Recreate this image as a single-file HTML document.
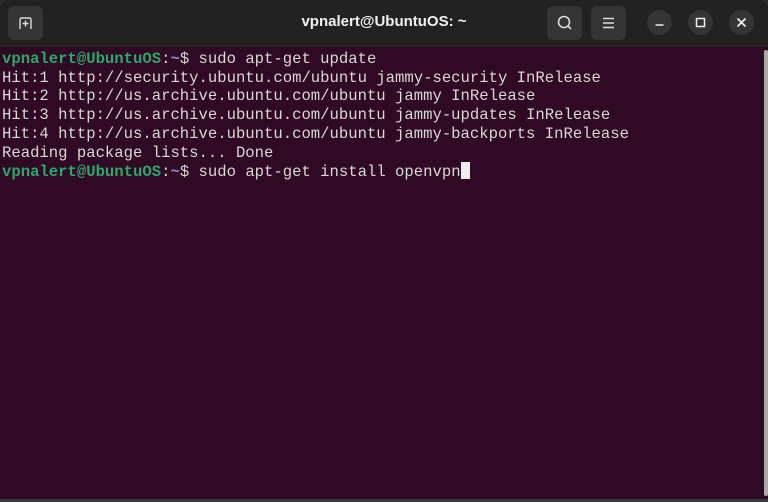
<!DOCTYPE html>
<html><head><style>
html,body{margin:0;padding:0;width:768px;height:502px;overflow:hidden;background:#2b2b2b;}
.win{position:absolute;left:0;top:0;width:768px;height:499px;background:#300a24;border-radius:10px 10px 0 0;overflow:hidden;}
.bar{position:absolute;left:0;top:0;width:768px;height:47px;background:#222222;}
.title{position:absolute;left:0;width:768px;top:13px;text-align:center;color:#f2f2f2;font:bold 15px "Liberation Sans",sans-serif;}
.btn{position:absolute;top:6px;width:35px;height:34px;background:#353535;border-radius:6px;}
.circ{position:absolute;top:10px;width:25px;height:25px;border-radius:50%;background:#353535;}
.term{position:absolute;left:2px;top:50px;font:15.6px/18.7px "Liberation Mono",monospace;color:#d8d8d5;white-space:pre;}
.g{color:#2aa86a;font-weight:bold}.b{color:#7b8fd0;font-weight:bold}
.cur{display:inline-block;width:9px;height:17px;background:#eee;vertical-align:-3px;}
.sb{position:absolute;left:764px;top:50px;width:4px;height:446px;background:#aaa;border-radius:2px;}
.bot{position:absolute;left:0;top:499px;width:768px;height:3px;background:#3a3a3a;}
</style></head><body>
<div class="win">
<div class="bar">
<div class="btn" style="left:8px"><svg width="35" height="34"><path d="M12 23V13.5a1.5 1.5 0 0 1 1.5-1.5h8a1.5 1.5 0 0 1 1.5 1.5V23M17.5 14.5v6M14.5 17.5h6" stroke="#ddd" stroke-width="1.4" fill="none"/></svg></div>
<div class="title">vpnalert@UbuntuOS: ~</div>
<div class="btn" style="left:547px"><svg width="35" height="34"><circle cx="17" cy="16" r="5.5" stroke="#ddd" stroke-width="1.6" fill="none"/><path d="M21 20l3 3" stroke="#ddd" stroke-width="1.6"/></svg></div>
<div class="btn" style="left:591px"><svg width="35" height="34"><path d="M12 12.5h11M12 17h11M12 21.5h11" stroke="#ddd" stroke-width="1.4"/></svg></div>
<div class="circ" style="left:647px"><svg width="25" height="25"><path d="M8.5 15h8" stroke="#eee" stroke-width="1.6"/></svg></div>
<div class="circ" style="left:688px"><svg width="25" height="25"><rect x="8.5" y="8.5" width="8" height="8" stroke="#eee" stroke-width="1.5" fill="none"/></svg></div>
<div class="circ" style="left:729px"><svg width="25" height="25"><path d="M8.5 8.5l8 8M16.5 8.5l-8 8" stroke="#eee" stroke-width="1.7"/></svg></div>
</div>
<div class="term"><span class="g">vpnalert@UbuntuOS</span>:<span class="b">~</span>$ sudo apt-get update
Hit:1 http://security.ubuntu.com/ubuntu jammy-security InRelease
Hit:2 http://us.archive.ubuntu.com/ubuntu jammy InRelease
Hit:3 http://us.archive.ubuntu.com/ubuntu jammy-updates InRelease
Hit:4 http://us.archive.ubuntu.com/ubuntu jammy-backports InRelease
Reading package lists... Done
<span class="g">vpnalert@UbuntuOS</span>:<span class="b">~</span>$ sudo apt-get install openvpn<span class="cur"></span></div>
<div class="sb"></div>
</div>
<div class="bot"></div>
</body></html>
